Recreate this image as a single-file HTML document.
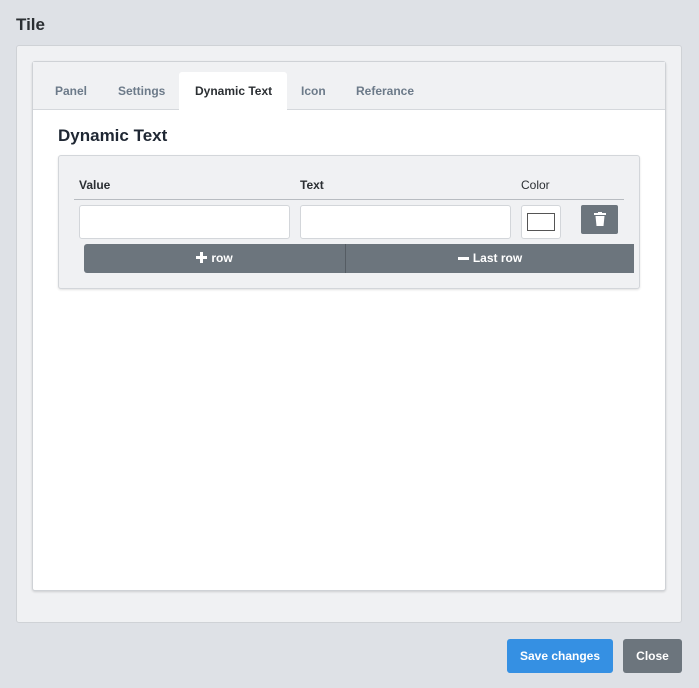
<!DOCTYPE html>
<html><head><style>
*{box-sizing:border-box;margin:0;padding:0}
body{width:699px;height:688px;background:#dee1e6;font-family:"Liberation Sans",sans-serif;position:relative;overflow:hidden}
.a{position:absolute}
.t{font-weight:bold}
</style></head><body>
<div class="a t" style="left:16px;top:15px;font-size:17px;color:#2b2f33">Tile</div>
<div class="a" style="left:16px;top:45px;width:666px;height:578px;background:#f0f1f3;border:1px solid #cfd2d6;border-radius:3px"></div>
<div class="a" style="left:32px;top:61px;width:634px;height:530px;background:#fff;border:1px solid #cfd2d6;border-radius:3px;box-shadow:0 1px 2px rgba(0,0,0,.15)"></div>
<div class="a" style="left:33px;top:62px;width:632px;height:48px;background:#f0f1f3;border-bottom:1px solid #d5d8dc"></div>
<div class="a" style="left:179px;top:72px;width:108px;height:39px;background:#fff;border-radius:3px 3px 0 0"></div>
<div class="a t" style="left:55px;top:84px;font-size:12px;color:#6c7a89">Panel</div>
<div class="a t" style="left:118px;top:84px;font-size:12px;color:#6c7a89">Settings</div>
<div class="a t" style="left:195px;top:84px;font-size:12px;color:#2b2f33">Dynamic Text</div>
<div class="a t" style="left:301px;top:84px;font-size:12px;color:#6c7a89">Icon</div>
<div class="a t" style="left:356px;top:84px;font-size:12px;color:#6c7a89">Referance</div>
<div class="a t" style="left:58px;top:126px;font-size:17px;color:#1f2733">Dynamic Text</div>
<div class="a" style="left:58px;top:155px;width:582px;height:134px;background:#f0f1f3;border:1px solid #d3d6da;border-radius:3px;box-shadow:0 1px 2px rgba(0,0,0,.12)"></div>
<div class="a t" style="left:79px;top:178px;font-size:12px;color:#2b2f33">Value</div>
<div class="a t" style="left:300px;top:178px;font-size:12px;color:#2b2f33">Text</div>
<div class="a" style="left:521px;top:178px;font-size:12px;color:#2b2f33;font-weight:500">Color</div>
<div class="a" style="left:74px;top:199px;width:550px;height:1px;background:#b8bcc1"></div>
<div class="a" style="left:79px;top:205px;width:211px;height:34px;background:#fff;border:1px solid #d3d6da;border-radius:3px"></div>
<div class="a" style="left:300px;top:205px;width:211px;height:34px;background:#fff;border:1px solid #d3d6da;border-radius:3px"></div>
<div class="a" style="left:521px;top:205px;width:40px;height:34px;background:#fff;border:1px solid #d3d6da;border-radius:3px"></div>
<div class="a" style="left:527px;top:213px;width:28px;height:18px;border:1px solid #555"></div>
<div class="a" style="left:581px;top:205px;width:37px;height:29px;background:#6c757d;border-radius:2px"></div>
<svg class="a" style="left:594px;top:212px" width="12" height="14" viewBox="0 0 12 14"><rect x="0" y="1" width="12" height="2" fill="#fff"/><rect x="4" y="0" width="4" height="2" fill="#fff"/><path d="M1.5 4h9l-1 10h-7z" fill="#fff"/></svg>
<div class="a t" style="left:84px;top:244px;width:261px;height:29px;background:#6c757d;border-radius:3px 0 0 3px;color:#fff;font-size:12px;text-align:center;line-height:29px"><span style="display:inline-block;position:relative;width:11px;height:11px;vertical-align:-1px;margin-right:4px"><span style="position:absolute;left:0;top:4px;width:11px;height:3px;background:#fff"></span><span style="position:absolute;left:4px;top:0;width:3px;height:11px;background:#fff"></span></span>row</div>
<div class="a t" style="left:345px;top:244px;width:289px;height:29px;background:#6c757d;border-left:1px solid #555c63;color:#fff;font-size:12px;text-align:center;line-height:29px"><span style="display:inline-block;width:11px;height:3px;background:#fff;vertical-align:middle;margin-right:4px"></span>Last row</div>
<div class="a t" style="left:507px;top:639px;width:106px;height:34px;background:#3590e3;border-radius:3px;color:#fff;font-size:12px;text-align:center;line-height:34px">Save changes</div>
<div class="a t" style="left:623px;top:639px;width:59px;height:34px;background:#6c757d;border-radius:3px;color:#fff;font-size:12px;text-align:center;line-height:34px">Close</div>
</body></html>
